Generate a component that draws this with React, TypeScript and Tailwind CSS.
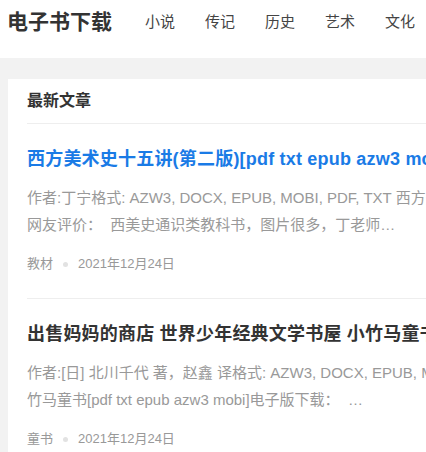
const nav = ['小说', '传记', '历史', '艺术', '文化'];

const posts = [
  {
    title: '西方美术史十五讲(第二版)[pdf txt epub azw3 mobi]电子版下载',
    highlight: true,
    lines: [
      '作者:丁宁格式: AZW3, DOCX, EPUB, MOBI, PDF, TXT 西方美术史十五讲(第二版)[pdf txt epub azw3 mobi]电子版下载：',
      '网友评价：  西美史通识类教科书，图片很多，丁老师…',
    ],
    tag: '教材',
    date: '2021年12月24日',
  },
  {
    title: '出售妈妈的商店 世界少年经典文学书屋 小竹马童书[pdf txt epub azw3 mobi]电子版下载',
    highlight: false,
    lines: [
      '作者:[日] 北川千代 著，赵鑫 译格式: AZW3, DOCX, EPUB, MOBI, PDF, TXT 出售妈妈的商店 世界少年经典文学书屋 小',
      '竹马童书[pdf txt epub azw3 mobi]电子版下载：  …',
    ],
    tag: '童书',
    date: '2021年12月24日',
  },
];

function PostItem({ post }: { post: (typeof posts)[number] }) {
  return (
    <div className="border-t border-[#eeeeee] pt-[22px] pb-[24px]">
      <h2
        className={`text-[18px] leading-[26px] font-bold whitespace-nowrap tracking-[0.2px] ${
          post.highlight ? 'text-[#1a7be6]' : 'text-[#333333]'
        }`}
      >
        {post.title}
      </h2>
      <div className="mt-3 text-[15px] leading-[27px] text-[#999999]">
        {post.lines.map((line) => (
          <p key={line} className="whitespace-pre overflow-hidden">
            {line}
          </p>
        ))}
      </div>
      <div className="mt-4 flex items-center text-[13px] leading-[20px] text-[#999999]">
        <span>{post.tag}</span>
        <span className="mx-[10px] h-[5px] w-[5px] rounded-full bg-[#e2e2e2]" />
        <span>{post.date}</span>
      </div>
    </div>
  );
}

export default function App() {
  return (
    <div
      className="h-screen w-full overflow-hidden bg-[#f2f2f2]"
      style={{ fontFamily: '"Liberation Sans", "Noto Sans CJK SC", sans-serif' }}
    >
      <div className="w-[1200px]">
        {/* Header */}
        <header className="h-[58px] bg-white pl-[7px]">
          <div className="h-[44px] flex items-center">
            <h1 className="text-[21px] font-bold text-[#333333]">电子书下载</h1>
            <nav className="ml-[18px] flex">
              {nav.map((item) => (
                <a key={item} className="px-[15px] text-[15px] text-[#444444]">
                  {item}
                </a>
              ))}
            </nav>
          </div>
        </header>

        {/* Latest posts */}
        <main className="mt-[21px] ml-[8px] bg-white px-[19px]">
          <div className="h-[44px] flex items-center">
            <h3 className="text-[16px] font-bold text-[#333333]">最新文章</h3>
          </div>
          {posts.map((post) => (
            <PostItem key={post.title} post={post} />
          ))}
        </main>
      </div>
    </div>
  );
}
